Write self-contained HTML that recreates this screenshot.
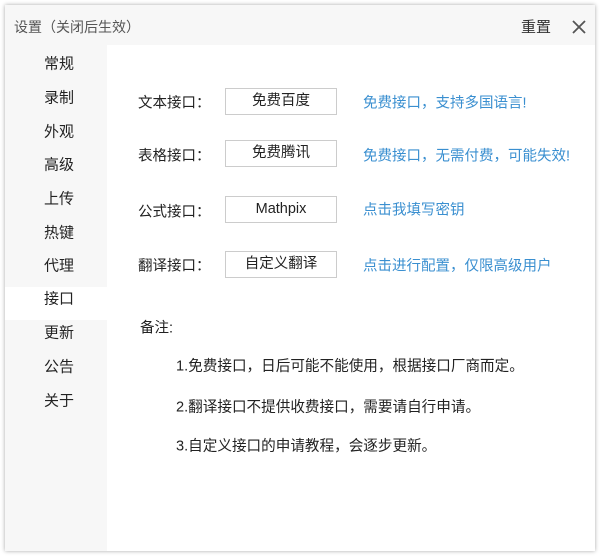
<!DOCTYPE html><html><head><meta charset="utf-8"><style>
body{margin:0;width:600px;height:557px;background:#fff;position:relative;overflow:hidden;font-family:"Liberation Sans","Noto Sans CJK SC",sans-serif;color:#222}
.win{position:absolute;left:5px;top:5px;width:590px;height:546px;background:#fff;box-shadow:0 0 4px rgba(0,0,0,.35)}
.title{position:absolute;left:0;top:0;width:590px;height:40px;background:#f7f7f7}
.t{position:absolute;font-size:14px;color:#555;white-space:nowrap}
.side{position:absolute;left:0;top:40px;width:102px;height:506px;background:#f7f7f7}
.sel{position:absolute;left:0;top:282px;width:102px;height:33px;background:#fff}
.s{position:absolute;left:39px;font-size:15px;color:#222;transform:translateY(-50%)}
.lab{position:absolute;left:133px;font-size:14.5px;transform:translateY(-50%);white-space:nowrap}
.box{position:absolute;left:220px;width:112px;height:27px;border:1px solid #ccc;box-sizing:border-box;text-align:center;line-height:25px;font-size:14.5px}
.lk{position:absolute;left:358px;font-size:14.5px;color:#3a8fd0;transform:translateY(-50%);white-space:nowrap}
.n{position:absolute;left:171px;font-size:14.6px;transform:translateY(-50%);white-space:nowrap}
</style></head><body><div class="win">
<div class="title"><div class="t" style="left:9px;top:12px">设置（关闭后生效）</div><div class="t" style="left:516px;top:11px;font-size:15px;color:#333">重置</div>
<svg style="position:absolute;left:567px;top:15px" width="14" height="14"><path d="M1 1L13 13M13 1L1 13" stroke="#555" stroke-width="1.8"/></svg></div>
<div class="side"></div><div class="sel"></div>
<div class="s" style="top:58px">常规</div><div class="s" style="top:92px">录制</div><div class="s" style="top:126px">外观</div><div class="s" style="top:159px">高级</div><div class="s" style="top:193px">上传</div><div class="s" style="top:227px">热键</div><div class="s" style="top:260px">代理</div><div class="s" style="top:293px">接口</div><div class="s" style="top:327px">更新</div><div class="s" style="top:361px">公告</div><div class="s" style="top:395px">关于</div>
<div class="lab" style="top:97px">文本接口：</div><div class="box" style="top:83px">免费百度</div><div class="lk" style="top:97px">免费接口，支持多国语言!</div>
<div class="lab" style="top:150px">表格接口：</div><div class="box" style="top:135px">免费腾讯</div><div class="lk" style="top:150px">免费接口，无需付费，可能失效!</div>
<div class="lab" style="top:206px">公式接口：</div><div class="box" style="top:191px">Mathpix</div><div class="lk" style="top:204px">点击我填写密钥</div>
<div class="lab" style="top:260px">翻译接口：</div><div class="box" style="top:246px">自定义翻译</div><div class="lk" style="top:260px">点击进行配置，仅限高级用户</div>
<div class="lab" style="top:322px;left:135px">备注:</div>
<div class="n" style="top:360px">1.免费接口，日后可能不能使用，根据接口厂商而定。</div>
<div class="n" style="top:401px">2.翻译接口不提供收费接口，需要请自行申请。</div>
<div class="n" style="top:440px">3.自定义接口的申请教程，会逐步更新。</div>
</div></body></html>
